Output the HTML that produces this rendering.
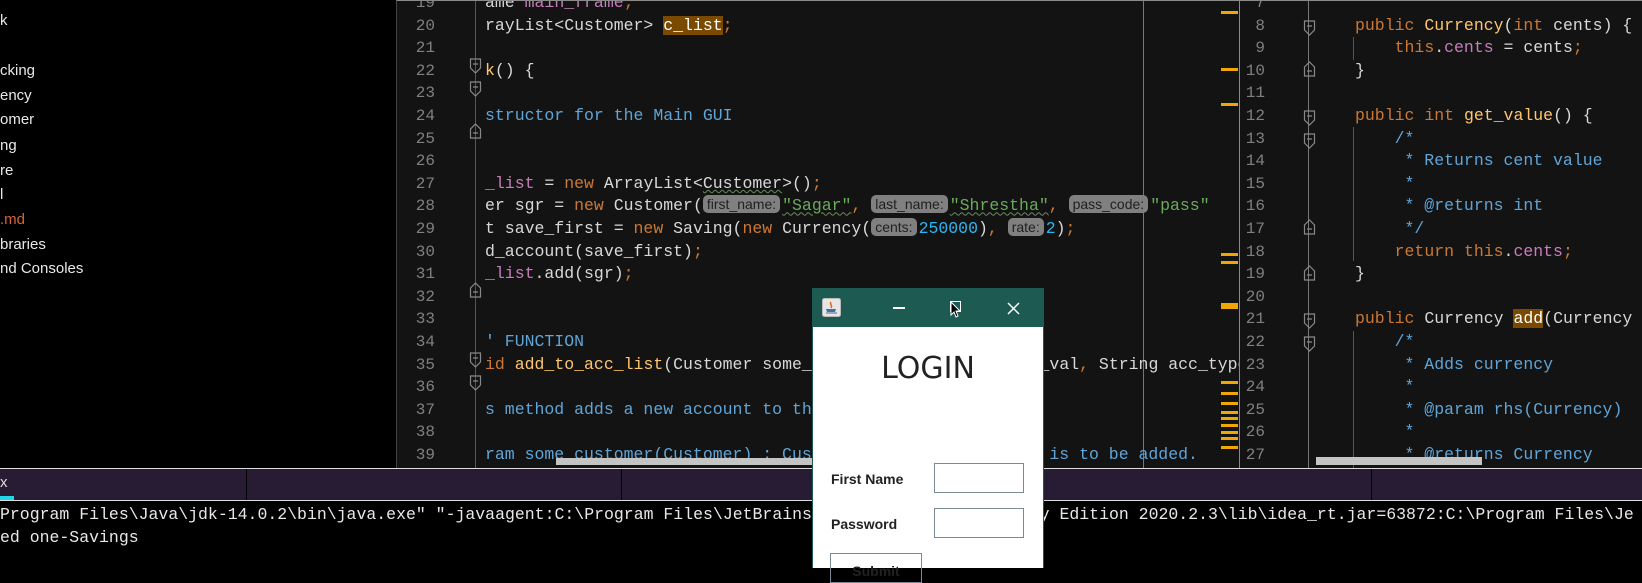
<!DOCTYPE html>
<html><head><meta charset="utf-8"><style>
*{margin:0;padding:0;box-sizing:border-box}
body{width:1642px;height:568px;overflow:hidden;background:#000;position:relative;font-family:"Liberation Mono",monospace}
.abs{position:absolute}
#tree{left:0;top:0;width:396px;height:468px;background:#000;color:#e8e8e8;font:15px "Liberation Sans",sans-serif}
#tree div{position:absolute;left:0;white-space:nowrap}
.ed{background:#131313;overflow:hidden;top:0;height:468px;border-top:1px solid #8a8a8a}
.code{position:absolute;white-space:pre;font-size:16.5px;line-height:22.6px;color:#d8d8d8}
.num{position:absolute;white-space:pre;font-size:16px;line-height:22.6px;color:#808080;text-align:right}
.k{color:#cc7832}.f{color:#ffc66d}.p{color:#c77dbb}.s{color:#6aab5a}.c{color:#5fa5d8}.n{color:#2fb4f0}.o{color:#cc7832}
.hl{background:#7a4a00;color:#fff}
.hint{display:inline-block;background:#808080;color:#202020;font:14px "Liberation Sans",sans-serif;border-radius:5px;padding:0 4px;line-height:18px;height:18px;vertical-align:1px;margin-right:2px}
.u{text-decoration:underline wavy #6a8a5a;text-decoration-thickness:1px}
.mk{position:absolute;left:1221px;width:17px;height:3px;background:#f0a800}
</style></head><body>

<div id="tree" class="abs">
<div style="top:12px">k</div>
<div style="top:62px">cking</div>
<div style="top:87px">ency</div>
<div style="top:111px">omer</div>
<div style="top:137px">ng</div>
<div style="top:162px">re</div>
<div style="top:186px">l</div>
<div style="top:211px;color:#d9643c">.md</div>
<div style="top:236px">braries</div>
<div style="top:260px">nd Consoles</div>
</div>

<!-- editor 1 -->
<div class="abs ed" style="left:396px;width:843px;border-left:1px solid #444">
<div class="num" style="left:0;width:38px;top:-9px">19
20
21
22
23
24
25
26
27
28
29
30
31
32
33
34
35
36
37
38
39</div>
<div class="abs" style="left:78px;top:0;width:1px;height:468px;background:#555"></div>
<div class="abs" style="left:746px;top:0;width:1px;height:468px;background:#777"></div>
<div class="code" style="left:88px;top:-9px">ame <span class="p">main_frame</span><span class="o">;</span>
rayList&lt;Customer&gt; <span class="hl">c_list</span><span class="o">;</span>

<span class="f">k</span>() {

<span class="c">structor for the Main GUI</span>


<span class="p">_list</span> = <span class="k">new</span> ArrayList&lt;<span class="u">Customer</span>&gt;()<span class="o">;</span>
er sgr = <span class="k">new</span> Customer(<span class="hint">first_name:</span><span class="s u">"Sagar"</span><span class="o">,</span> <span class="hint">last_name:</span><span class="s u">"Shrestha"</span><span class="o">,</span> <span class="hint">pass_code:</span><span class="s">"pass"</span>
t save_first = <span class="k">new</span> Saving(<span class="k">new</span> Currency(<span class="hint">cents:</span><span class="n">250000</span>)<span class="o">,</span> <span class="hint">rate:</span><span class="n">2</span>)<span class="o">;</span>
d_account(save_first)<span class="o">;</span>
<span class="p">_list</span>.add(sgr)<span class="o">;</span>


<span class="c">' FUNCTION</span>
<span class="k">id</span> <span class="f">add_to_acc_list</span>(Customer some_customer, Currency init_val<span class="o">,</span> String acc_type

<span class="c">s method adds a new account to the customer</span>

<span class="c">ram some_customer(Customer) : Customer, the object which is to be added.</span></div>
<svg class="abs" style="left:72px;top:0" width="14" height="468">
<g fill="none" stroke="#888" stroke-width="1.2">
<path d="M1.5 58v9l5 5 5-5v-9z M4 63h5"/>
<path d="M1.5 81v9l5 5 5-5v-9z M4 86h5"/>
<path d="M1.5 137v-9l5-5 5 5v9z M4 132h5"/>
<path d="M1.5 296v-9l5-5 5 5v9z M4 291h5"/>
<path d="M1.5 352v9l5 5 5-5v-9z M4 357h5"/>
<path d="M1.5 375v9l5 5 5-5v-9z M4 380h5"/>
</g></svg>
<div class="abs" style="left:159px;top:457px;width:256px;height:7px;background:#c4c4c4"></div>
</div>
<!-- markers -->
<div class="mk" style="top:11px"></div><div class="mk" style="top:68px"></div><div class="mk" style="top:103px"></div>
<div class="mk" style="top:253px"></div><div class="mk" style="top:261px"></div><div class="mk" style="top:303px"></div><div class="mk" style="top:306px"></div>
<div class="mk" style="top:381px"></div><div class="mk" style="top:392px"></div><div class="mk" style="top:402px"></div><div class="mk" style="top:411px"></div><div class="mk" style="top:417px"></div><div class="mk" style="top:424px"></div><div class="mk" style="top:431px"></div><div class="mk" style="top:437px"></div><div class="mk" style="top:446px"></div>

<!-- editor 2 -->
<div class="abs ed" style="left:1239px;width:403px;border-left:1px solid #8a8a8a">
<div class="num" style="left:0;width:25px;top:-9px">7
8
9
10
11
12
13
14
15
16
17
18
19
20
21
22
23
24
25
26
27</div>
<div class="abs" style="left:68px;top:0;width:1px;height:468px;background:#777"></div>
<div class="abs" style="left:113px;top:36px;width:1px;height:23px;background:#555"></div>
<div class="abs" style="left:113px;top:126px;width:1px;height:134px;background:#555"></div>
<div class="abs" style="left:113px;top:330px;width:1px;height:138px;background:#555"></div>
<div class="code" style="left:115px;top:-9px">
<span class="k">public</span> <span class="f">Currency</span>(<span class="k">int</span> cents) {
    <span class="k">this</span>.<span class="p">cents</span> = cents<span class="o">;</span>
}

<span class="k">public</span> <span class="k">int</span> <span class="f">get_value</span>() {
    <span class="c">/*</span>
<span class="c">     * Returns cent value</span>
<span class="c">     *</span>
<span class="c">     * @returns int</span>
<span class="c">     */</span>
    <span class="k">return</span> <span class="k">this</span>.<span class="p">cents</span><span class="o">;</span>
}

<span class="k">public</span> Currency <span class="hl">add</span>(Currency rhs) {
    <span class="c">/*</span>
<span class="c">     * Adds currency</span>
<span class="c">     *</span>
<span class="c">     * @param rhs(Currency)</span>
<span class="c">     *</span>
<span class="c">     * @returns Currency</span></div>
<svg class="abs" style="left:63px;top:0" width="14" height="468">
<g fill="none" stroke="#888" stroke-width="1.2">
<path d="M1.5 20v9l5 5 5-5v-9z M4 25h5"/>
<path d="M1.5 75v-9l5-5 5 5v9z M4 70h5"/>
<path d="M1.5 110v9l5 5 5-5v-9z M4 115h5"/>
<path d="M1.5 133v9l5 5 5-5v-9z M4 138h5"/>
<path d="M1.5 233v-9l5-5 5 5v9z M4 228h5"/>
<path d="M1.5 279v-9l5-5 5 5v9z M4 274h5"/>
<path d="M1.5 313v9l5 5 5-5v-9z M4 318h5"/>
<path d="M1.5 336v9l5 5 5-5v-9z M4 341h5"/>
</g></svg>
<div class="abs" style="left:76px;top:456px;width:166px;height:8px;background:#c4c4c4"></div>
</div>

<!-- bottom tab bar -->
<div class="abs" style="left:0;top:468px;width:1642px;height:33px;background:#281b34;border-top:1px solid #ddd;border-bottom:1px solid #ddd"></div>
<div class="abs" style="left:246px;top:469px;width:1px;height:31px;background:#000"></div>
<div class="abs" style="left:621px;top:469px;width:1px;height:31px;background:#000"></div>
<div class="abs" style="left:1371px;top:469px;width:1px;height:31px;background:#000"></div>
<div class="abs" style="left:0;top:474px;color:#ddd;font:15px 'Liberation Sans',sans-serif">x</div>
<div class="abs" style="left:0;top:496px;width:14px;height:4px;background:#1ed8ea"></div>

<!-- console -->
<div class="code" style="left:0;top:504px;color:#e8e8e8">Program Files\Java\jdk-14.0.2\bin\java.exe" "-javaagent:C:\Program Files\JetBrains\IntelliJ IDEA Community Edition 2020.2.3\lib\idea_rt.jar=63872:C:\Program Files\Je
ed one-Savings</div>

<!-- dialog -->
<div class="abs" style="left:812px;top:288px;width:232px;height:280px;background:#fff;border:1px solid #1d5b52;border-bottom:none">
<div class="abs" style="left:0;top:0;width:230px;height:38px;background:#1d5b52"></div>
<svg class="abs" style="left:9px;top:9px" width="20" height="19"><rect x="0.5" y="0.5" width="18" height="18" rx="2" fill="#e6e6e6" stroke="#bbb"/><path d="M9 4c-2 2 2 3 0 6" stroke="#e06a1a" stroke-width="1.5" fill="none"/><path d="M4 11h10l-1 3H5z" fill="#4a6fa0"/><path d="M4 15h11" stroke="#4a6fa0"/></svg>
<div class="abs" style="left:80px;top:18px;width:12px;height:1.5px;background:#fff"></div>
<div class="abs" style="left:137px;top:12px;width:11px;height:11px;border:1.5px solid #fff"></div>
<svg class="abs" style="left:137px;top:12px" width="14" height="18"><path d="M1 1v13l3-3 2 5 2-1-2-5h4z" fill="#000" stroke="#fff"/></svg>
<svg class="abs" style="left:194px;top:13px" width="13" height="13"><path d="M1 1l11 11M12 1L1 12" stroke="#fff" stroke-width="1.5"/></svg>
<div class="abs" style="left:0;top:62px;width:230px;text-align:center;font:30px 'Comic Sans MS','DejaVu Sans',sans-serif;color:#222">LOGIN</div>
<div class="abs" style="left:18px;top:182px;font:bold 14px 'Liberation Sans',sans-serif;color:#222">First Name</div>
<div class="abs" style="left:18px;top:227px;font:bold 14px 'Liberation Sans',sans-serif;color:#222">Password</div>
<div class="abs" style="left:121px;top:174px;width:90px;height:30px;border:1px solid #7a8a95"></div>
<div class="abs" style="left:121px;top:219px;width:90px;height:30px;border:1px solid #7a8a95"></div>
<div class="abs" style="left:17px;top:264px;width:92px;height:30px;border:1px solid #7a8a95;font:bold 14px 'Liberation Sans',sans-serif;text-align:center;padding-top:9px;color:#222">Submit</div>
</div>
</body></html>
